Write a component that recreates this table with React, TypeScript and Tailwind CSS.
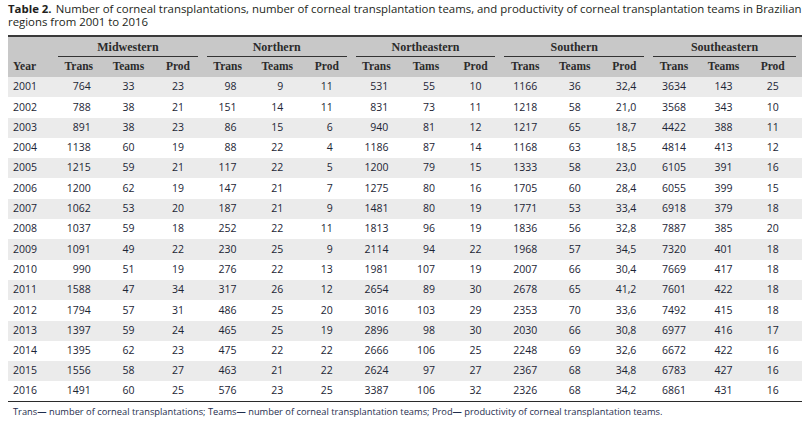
import React from 'react';

const regions = ['Midwestern', 'Northern', 'Northeastern', 'Southern', 'Southeastern'];
const subHeads = ['Trans', 'Teams', 'Prod', 'Trans', 'Teams', 'Prod', 'Trans', 'Tams', 'Prod', 'Trans', 'Teams', 'Prod', 'Trans', 'Teams', 'Prod'];

const rows: string[][] = [
  ['2001', '764', '33', '23', '98', '9', '11', '531', '55', '10', '1166', '36', '32,4', '3634', '143', '25'],
  ['2002', '788', '38', '21', '151', '14', '11', '831', '73', '11', '1218', '58', '21,0', '3568', '343', '10'],
  ['2003', '891', '38', '23', '86', '15', '6', '940', '81', '12', '1217', '65', '18,7', '4422', '388', '11'],
  ['2004', '1138', '60', '19', '88', '22', '4', '1186', '87', '14', '1168', '63', '18,5', '4814', '413', '12'],
  ['2005', '1215', '59', '21', '117', '22', '5', '1200', '79', '15', '1333', '58', '23,0', '6105', '391', '16'],
  ['2006', '1200', '62', '19', '147', '21', '7', '1275', '80', '16', '1705', '60', '28,4', '6055', '399', '15'],
  ['2007', '1062', '53', '20', '187', '21', '9', '1481', '80', '19', '1771', '53', '33,4', '6918', '379', '18'],
  ['2008', '1037', '59', '18', '252', '22', '11', '1813', '96', '19', '1836', '56', '32,8', '7887', '385', '20'],
  ['2009', '1091', '49', '22', '230', '25', '9', '2114', '94', '22', '1968', '57', '34,5', '7320', '401', '18'],
  ['2010', '990', '51', '19', '276', '22', '13', '1981', '107', '19', '2007', '66', '30,4', '7669', '417', '18'],
  ['2011', '1588', '47', '34', '317', '26', '12', '2654', '89', '30', '2678', '65', '41,2', '7601', '422', '18'],
  ['2012', '1794', '57', '31', '486', '25', '20', '3016', '103', '29', '2353', '70', '33,6', '7492', '415', '18'],
  ['2013', '1397', '59', '24', '465', '25', '19', '2896', '98', '30', '2030', '66', '30,8', '6977', '416', '17'],
  ['2014', '1395', '62', '23', '475', '22', '22', '2666', '106', '25', '2248', '69', '32,6', '6672', '422', '16'],
  ['2015', '1556', '58', '27', '463', '21', '22', '2624', '97', '27', '2367', '68', '34,8', '6783', '427', '16'],
  ['2016', '1491', '60', '25', '576', '23', '25', '3387', '106', '32', '2326', '68', '34,2', '6861', '431', '16'],
];

// widest value per column, so numbers right-align in a centered block
const colWidths = subHeads.map((_, i) => Math.max(...rows.map(r => r[i + 1].length)));

const serif = "font-['Liberation_Serif',serif]";

export default function App() {
  return (
    <div className="w-[806px] h-[422px] bg-white overflow-hidden px-2 pt-[3px] font-['Open_Sans',sans-serif]">
      <div className="text-[11.4px] leading-[12.5px] text-[#231f20] whitespace-nowrap">
        <div className="flex gap-[4px]">
          <span className="font-bold">Table 2.</span>
          <span>Number of corneal transplantations, number of corneal transplantation teams, and productivity of corneal transplantation teams in Brazilian</span>
        </div>
        <div>regions from 2001 to 2016</div>
      </div>

      <table className="mt-[7px] w-[794px] table-fixed border-collapse">
        <colgroup>
          <col className="w-[46px]" />
          {subHeads.map((_, i) => (
            <col key={i} className={i === 14 ? 'w-[53.5px]' : 'w-[49.6px]'} />
          ))}
        </colgroup>
        <thead className={`${serif} font-bold text-[#2b2b2b] bg-[#c8c8c8]`}>
          <tr className="border-t-2 border-[#3a3a3a] h-[21px]">
            <th />
            {regions.map((r, i) => (
              <th key={r} colSpan={3} className="p-0 pt-[3px] align-top">
                <div className={`text-[12px] leading-[14px] pb-[2px] border-b border-[#333] ml-1 ${i === 4 ? 'mr-[6px]' : 'mr-[5px]'}`}>
                  {r}
                </div>
              </th>
            ))}
          </tr>
          <tr className="h-[20px] text-[11.5px]">
            <th className="text-left pl-[5px] font-bold">Year</th>
            {subHeads.map((h, i) => (
              <th key={i} className={`font-bold text-center ${i === 14 ? 'pr-[5px]' : ''}`}>{h}</th>
            ))}
          </tr>
        </thead>
        <tbody className="text-[10.5px] font-medium text-[#1c2535] border-b-[1.5px] border-[#2b2b2b]">
          {rows.map((r, ri) => (
            <tr key={r[0]} className={`h-[20.3px] ${ri % 2 === 0 ? 'bg-[#ebebeb]' : 'bg-white'}`}>
              <td className="pl-[5px] text-left">{r[0]}</td>
              {r.slice(1).map((v, ci) => (
                <td key={ci} className={`text-center p-0 ${ci === 14 ? 'pr-[5px]' : ''}`}>
                  <span className="inline-block text-right" style={{ width: `${colWidths[ci]}ch` }}>{v}</span>
                </td>
              ))}
            </tr>
          ))}
        </tbody>
      </table>

      <p className="mt-[3px] pl-[5px] text-[9.3px] text-[#1e2d4d] whitespace-nowrap">
        Trans<span className="font-bold">—</span> number of corneal transplantations; Teams<span className="font-bold">—</span> number of corneal transplantation teams; Prod<span className="font-bold">—</span> productivity of corneal transplantation teams.
      </p>
    </div>
  );
}
